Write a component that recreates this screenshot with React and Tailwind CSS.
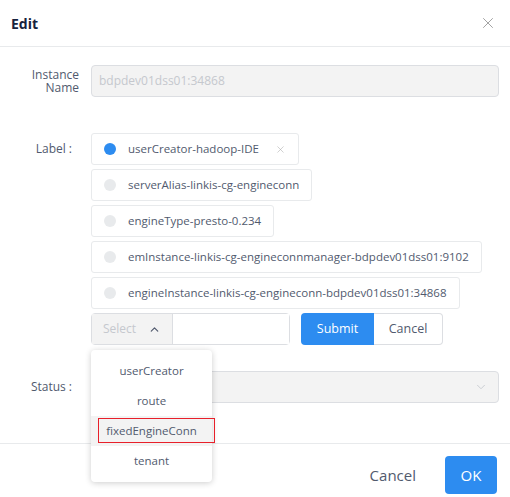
import { X, ChevronUp, ChevronDown } from 'lucide-react';

const tags = [
  { text: 'userCreator-hadoop-IDE', active: true },
  { text: 'serverAlias-linkis-cg-engineconn' },
  { text: 'engineType-presto-0.234' },
  { text: 'emInstance-linkis-cg-engineconnmanager-bdpdev01dss01:9102' },
  { text: 'engineInstance-linkis-cg-engineconn-bdpdev01dss01:34868' },
];

const options = ['userCreator', 'route', 'fixedEngineConn', 'tenant'];

export default function App() {
  return (
    <div className="relative h-[497px] w-[510px] overflow-hidden bg-white font-['Open_Sans',sans-serif] text-[#515a6e]">
      {/* header */}
      <div className="flex h-[47px] items-center justify-between border-b border-[#e8eaec] pl-[11px] pr-[13px]">
        <span className="text-[14px] font-bold text-[#17233d]">Edit</span>
        <X size={18} strokeWidth={1.2} className="text-[#999]" />
      </div>

      {/* body */}
      <div className="h-[396px] pt-[18px]">
        <div className="flex items-center">
          <div className="w-[91px] pr-3 text-right text-[12px] leading-[13px] text-[#515a6e]">
            Instance
            <br />
            Name
          </div>
          <div className="flex h-[32px] w-[408px] items-center rounded border border-[#dcdee2] bg-[#f3f3f3] px-[7px] text-[12px] text-[#c5c8ce]">
            bdpdev01dss01:34868
          </div>
        </div>

        <div className="mt-[36px] flex">
          <div className="w-[91px] pr-[19px] pt-[7px] text-right text-[12px]">
            Label<span className="ml-[3px]">:</span>
          </div>
          <div className="flex flex-col items-start gap-[4px]">
            {tags.map((t) => (
              <div
                key={t.text}
                className="flex h-[32px] items-center whitespace-nowrap rounded-[3px] border border-[#e8eaec] bg-white pl-[12px] pr-[12px] text-[11.5px] text-[#515a6e]"
              >
                <span
                  className={`mr-[12px] h-[12px] w-[12px] shrink-0 rounded-full ${t.active ? 'bg-[#2d8cf0]' : 'bg-[#e8eaec]'}`}
                />
                {t.text}
                {t.active ? <X size={11} strokeWidth={1.2} className="ml-[16px] text-[#aaa]" /> : null}
              </div>
            ))}
            <div className="flex">
              <div className="flex h-[32px] w-[199px] rounded border border-[#dcdee2]">
                <div className="flex w-[81px] items-center justify-center gap-[12px] border-r border-[#dcdee2] bg-[#f3f3f3] text-[12px] text-[#c5c8ce]">
                  Select
                  <ChevronUp size={13} strokeWidth={2.2} className="text-[#515a6e]" />
                </div>
                <div className="flex-1 bg-white" />
              </div>
              <div className="ml-[11px] flex h-[32px]">
                <div className="flex w-[73px] items-center justify-center rounded-l bg-[#2d8cf0] text-[12.5px] text-white">
                  Submit
                </div>
                <div className="flex w-[69px] items-center justify-center rounded-r border border-l-0 border-[#dcdee2] text-[12.5px] text-[#515a6e]">
                  Cancel
                </div>
              </div>
            </div>
          </div>
        </div>

        <div className="mt-[26px] flex items-center">
          <div className="w-[91px] pr-[19px] text-right text-[12px]">
            Status<span className="ml-[3px]">:</span>
          </div>
          <div className="flex h-[32px] w-[408px] items-center justify-end rounded border border-[#dcdee2] bg-[#f3f3f3] pr-[10px]">
            <ChevronDown size={14} strokeWidth={1.5} className="text-[#c5c8ce]" />
          </div>
        </div>
      </div>

      {/* footer */}
      <div className="flex items-center justify-end gap-[29px] border-t border-[#e8eaec] pt-[12px] pr-[13px]">
        <span className="text-[15px] text-[#515a6e]">Cancel</span>
        <div className="flex h-[38px] w-[52px] items-center justify-center rounded bg-[#2d8cf0] text-[15px] text-white">
          OK
        </div>
      </div>

      {/* dropdown */}
      <div className="absolute left-[91px] top-[350px] w-[121px] rounded bg-white py-[6px] shadow-[0_1px_6px_rgba(0,0,0,0.2)]">
        {options.map((o) => (
          <div
            key={o}
            className={`flex h-[30px] items-center justify-center text-[11.5px] text-[#515a6e] ${o === 'fixedEngineConn' ? 'bg-[#f3f3f3]' : ''}`}
          >
            {o}
          </div>
        ))}
      </div>
      <div className="absolute left-[98px] top-[418px] h-[25px] w-[117px] border border-[#e8202a]" />
    </div>
  );
}
